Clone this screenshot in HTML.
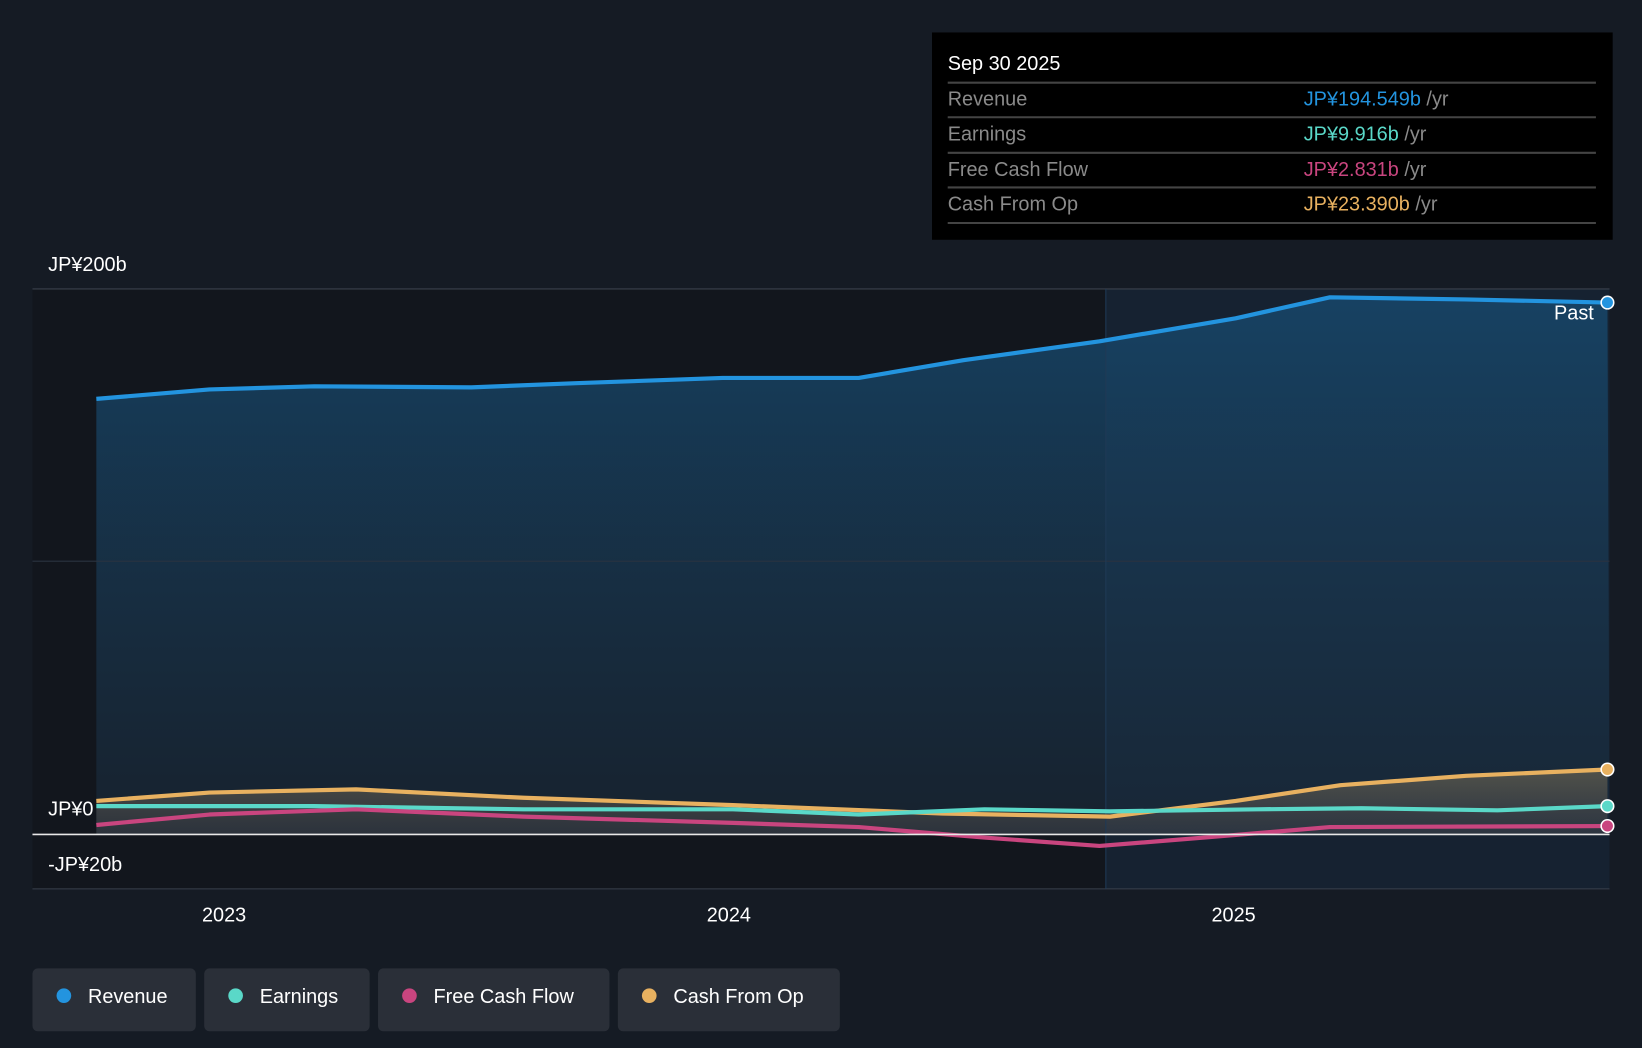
<!DOCTYPE html>
<html><head><meta charset="utf-8"><style>
html,body{margin:0;padding:0;background:#151b24;overflow:hidden}
svg{display:block}
text{font-family:"Liberation Sans",sans-serif}
</style></head><body>
<svg width="1642" height="1048" viewBox="0 0 1568 1001" preserveAspectRatio="none" xmlns="http://www.w3.org/2000/svg">
<defs>
<linearGradient id="rg" x1="0" y1="0" x2="0" y2="1">
<stop offset="0" stop-color="#17476b" stop-opacity="0.85"/>
<stop offset="1" stop-color="#1a2a3a" stop-opacity="0.6"/>
</linearGradient>
<linearGradient id="og" x1="0" y1="0" x2="0" y2="1">
<stop offset="0" stop-color="#8a7a5a" stop-opacity="0.5"/>
<stop offset="1" stop-color="#4a4a50" stop-opacity="0.4"/>
</linearGradient>
</defs>
<rect width="1568" height="1001" fill="#151b24"/>
<rect x="31" y="276" width="1025" height="573" fill="#12161d"/>
<rect x="1056" y="276" width="481" height="573" fill="#162231"/>
<path d="M92,381 L200,372 L300,369 L450,370 L550,366 L690,361 L820,361 L920,344 L1050,326 L1180,304 L1270,284 L1400,286 L1535,289 L1537,797 L92,797 Z" fill="url(#rg)"/>
<path d="M92,765 L200,757 L340,754 L500,762 L700,769 L900,777 L1060,780 L1180,765 L1280,750 L1400,741 L1535,735 L1535,797 L92,797 Z" fill="url(#og)"/>
<line x1="31" y1="276" x2="1537" y2="276" stroke="#3a414c" stroke-width="1"/>
<line x1="31" y1="536" x2="1537" y2="536" stroke="#2a3340" stroke-width="1"/>
<line x1="31" y1="849" x2="1537" y2="849" stroke="#3a414c" stroke-width="1"/>
<line x1="1056" y1="276" x2="1056" y2="849" stroke="#1f3a55" stroke-width="1"/>
<polyline fill="none" stroke="#2394df" stroke-width="4" stroke-linejoin="round" points="92,381 200,372 300,369 450,370 550,366 690,361 820,361 920,344 1050,326 1180,304 1270,284 1400,286 1535,289"/>
<polyline fill="none" stroke="#e8b160" stroke-width="4" stroke-linejoin="round" points="92,765 200,757 340,754 500,762 700,769 900,777 1060,780 1180,765 1280,750 1400,741 1535,735"/>
<polyline fill="none" stroke="#5ad8c8" stroke-width="4" stroke-linejoin="round" points="92,770 300,770 500,773 700,773 820,778 940,773 1060,775 1200,773 1300,772 1430,774 1535,770"/>
<polyline fill="none" stroke="#c9457f" stroke-width="4" stroke-linejoin="round" points="92,788 200,778 340,773 500,780 700,786 820,790 940,800 1050,808 1150,800 1270,790 1535,789"/>
<line x1="31" y1="797" x2="1537" y2="797" stroke="#e8e8e8" stroke-width="1.5"/>
<circle cx="1535" cy="289" r="6" fill="#2394df" stroke="#fff" stroke-width="1.5"/>
<circle cx="1535" cy="735" r="6" fill="#e8b160" stroke="#fff" stroke-width="1.5"/>
<circle cx="1535" cy="770" r="6" fill="#5ad8c8" stroke="#fff" stroke-width="1.5"/>
<circle cx="1535" cy="789" r="6" fill="#c9457f" stroke="#fff" stroke-width="1.5"/>
<text x="1522" y="305" fill="#fff" font-size="19" text-anchor="end">Past</text>
<text x="46" y="259" fill="#fff" font-size="19">JP¥200b</text>
<text x="46" y="779" fill="#fff" font-size="19">JP¥0</text>
<text x="46" y="832" fill="#fff" font-size="19">-JP¥20b</text>
<text x="214" y="880" fill="#fff" font-size="19" text-anchor="middle">2023</text>
<text x="696" y="880" fill="#fff" font-size="19" text-anchor="middle">2024</text>
<text x="1178" y="880" fill="#fff" font-size="19" text-anchor="middle">2025</text>
<rect x="890" y="31" width="650" height="198" fill="#000"/>
<text x="905" y="67" fill="#fff" font-size="19">Sep 30 2025</text>
<g stroke="#444" stroke-width="2">
<line x1="905" y1="79" x2="1524" y2="79"/><line x1="905" y1="112" x2="1524" y2="112"/>
<line x1="905" y1="146" x2="1524" y2="146"/><line x1="905" y1="179" x2="1524" y2="179"/>
<line x1="905" y1="213" x2="1524" y2="213"/></g>
<g font-size="19">
<text x="905" y="101" fill="#8a8a8a">Revenue</text>
<text x="905" y="134" fill="#8a8a8a">Earnings</text>
<text x="905" y="168" fill="#8a8a8a">Free Cash Flow</text>
<text x="905" y="201" fill="#8a8a8a">Cash From Op</text>
<text x="1245" y="101" fill="#2394df">JP¥194.549b <tspan fill="#8a8a8a">/yr</tspan></text>
<text x="1245" y="134" fill="#5ad8c8">JP¥9.916b <tspan fill="#8a8a8a">/yr</tspan></text>
<text x="1245" y="168" fill="#c9457f">JP¥2.831b <tspan fill="#8a8a8a">/yr</tspan></text>
<text x="1245" y="201" fill="#e8b160">JP¥23.390b <tspan fill="#8a8a8a">/yr</tspan></text>
</g>
<g font-size="19" fill="#fff">
<rect x="31" y="925" width="156" height="60" rx="5" fill="#2a2f38"/>
<circle cx="61" cy="951" r="7" fill="#2394df"/><text x="84" y="958">Revenue</text>
<rect x="195" y="925" width="158" height="60" rx="5" fill="#2a2f38"/>
<circle cx="225" cy="951" r="7" fill="#5ad8c8"/><text x="248" y="958">Earnings</text>
<rect x="361" y="925" width="221" height="60" rx="5" fill="#2a2f38"/>
<circle cx="391" cy="951" r="7" fill="#c9457f"/><text x="414" y="958">Free Cash Flow</text>
<rect x="590" y="925" width="212" height="60" rx="5" fill="#2a2f38"/>
<circle cx="620" cy="951" r="7" fill="#e8b160"/><text x="643" y="958">Cash From Op</text>
</g>
</svg>
</body></html>
